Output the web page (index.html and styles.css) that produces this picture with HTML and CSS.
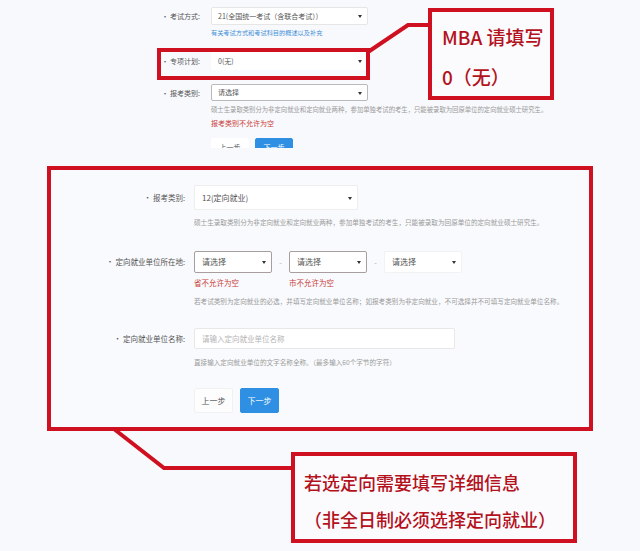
FILE: index.html
```html
<!DOCTYPE html>
<html lang="zh-CN">
<head>
    <meta charset="UTF-8">
    <meta name="viewport" content="width=device-width, initial-scale=1.0">
    <title>报考信息 - 定向就业说明</title>
    <link rel="stylesheet" href="styles.css">
</head>
<body>

    <div class="page">
        <!-- Original form snippet (top) -->
        <section class="snippet">
            <div class="s-row">
                <label class="lbl">• 考试方式:</label>
                <div class="ctl">
                    <div class="sel">21(全国统一考试（含联合考试）)<i class="caret"></i></div>
                    <a class="link" href="#">有关考试方式和考试科目的概述以及补充</a>
                </div>
            </div>

            <div class="s-row row-plan">
                <label class="lbl">• 专项计划:</label>
                <div class="ctl">
                    <div class="sel sel-plain">0(无)<i class="caret"></i></div>
                </div>
            </div>

            <div class="s-row row-type">
                <label class="lbl">• 报考类别:</label>
                <div class="ctl">
                    <div class="sel sel-dark">请选择<i class="caret"></i></div>
                    <p class="help">硕士生录取类别分为非定向就业和定向就业两种，参加单独考试的考生，只能被录取为回原单位的定向就业硕士研究生。</p>
                    <p class="error">报考类别不允许为空</p>
                    <div class="btns">
                        <button class="btn btn-prev">上一步</button>
                        <button class="btn btn-next">下一步</button>
                    </div>
                </div>
            </div>
        </section>

        <!-- Enlarged part, framed in red -->
        <section class="zoom-box">
            <div class="z-row">
                <label class="lbl">• 报考类别:</label>
                <div class="ctl">
                    <div class="sel sel-wide">12(定向就业)<i class="caret"></i></div>
                    <p class="help">硕士生录取类别分为非定向就业和定向就业两种，参加单独考试的考生，只能被录取为回原单位的定向就业硕士研究生。</p>
                </div>
            </div>

            <div class="z-row row-place">
                <label class="lbl">• 定向就业单位所在地:</label>
                <div class="ctl">
                    <div class="place">
                        <div class="sel sel-err">请选择<i class="caret"></i></div>
                        <span class="sep">-</span>
                        <div class="sel sel-err">请选择<i class="caret"></i></div>
                        <span class="sep">-</span>
                        <div class="sel sel-faint">请选择<i class="caret"></i></div>
                    </div>
                    <div class="errors">
                        <p class="error">省不允许为空</p>
                        <p class="error">市不允许为空</p>
                    </div>
                    <p class="help help-gap">若考试类别为定向就业的必选，并填写定向就业单位名称；如报考类别为非定向就业，不可选择并不可填写定向就业单位名称。</p>
                </div>
            </div>

            <div class="z-row row-name">
                <label class="lbl">• 定向就业单位名称:</label>
                <div class="ctl">
                    <input class="text-input" type="text" placeholder="请输入定向就业单位名称">
                    <p class="help help-gap">直接输入定向就业单位的文字名称全称。（最多输入60个字节的字符）</p>
                </div>
            </div>

            <div class="z-row row-btns">
                <span></span>
                <div class="btns">
                    <button class="btn btn-prev">上一步</button>
                    <button class="btn btn-next">下一步</button>
                </div>
            </div>
        </section>

        <!-- Callouts -->
        <div class="note note-top">MBA 请填写<br>0（无）</div>
        <div class="note note-bottom">若选定向需要填写详细信息<br>（非全日制必须选择定向就业）</div>

        <svg class="leaders" width="640" height="551" viewBox="0 0 640 551">
            <rect x="159" y="50" width="209" height="28" />
            <polyline points="368,52 408,25 430,25" />
            <polyline points="114,429 164,468 293,468" />
        </svg>
    </div>

</body>
</html>
```

FILE: styles.css
```css
/* Base */
body {
    margin: 0;
    background-color: #f8f9fc;
    font-family: "Noto Sans CJK SC", "Noto Sans", sans-serif;
    color: #555;
}

p {
    margin: 0;
}

.page {
    position: relative;
    width: 640px;
    height: 551px;
    overflow: hidden;
}

/* Shared controls */
.lbl {
    text-align: right;
    white-space: nowrap;
    color: #555;
}

.sel {
    position: relative;
    box-sizing: border-box;
    background-color: #fff;
    border: 1px solid #e6e6e6;
    border-radius: 2px;
    white-space: nowrap;
    color: #555;
}

.caret {
    position: absolute;
    top: 50%;
    right: 5px;
    width: 0;
    height: 0;
    margin-top: -1px;
    border-left: 2px solid transparent;
    border-right: 2px solid transparent;
    border-top: 3px solid #333;
}

.help {
    white-space: nowrap;
    color: #9a9a9a;
}

.error {
    white-space: nowrap;
    color: #c9403a;
}

.btns {
    display: flex;
}

.btn {
    box-sizing: border-box;
    padding: 0;
    border: 1px solid transparent;
    border-radius: 2px;
    font-family: inherit;
    cursor: pointer;
}

.btn-prev {
    background-color: #fdfdfd;
    border-color: #f1f1f1;
    color: #555;
}

.btn-next {
    background-color: #2f8fe3;
    border-color: #2f8fe3;
    color: #fff;
}

/* Top snippet */
.snippet {
    box-sizing: border-box;
    height: 148px;
    padding-top: 7px;
    overflow: hidden;
    font-size: 7px;
}

.s-row {
    display: grid;
    grid-template-columns: 200px 157px;
    column-gap: 11px;
    align-items: start;
}

.s-row .lbl {
    line-height: 18px;
}

.s-row .sel {
    height: 18px;
    padding: 0 6px;
    line-height: 16px;
}

.link {
    display: block;
    margin-top: 4px;
    line-height: 8px;
    font-size: 6.2px;
    color: #3d8fd9;
    text-decoration: none;
}

.row-plan {
    margin-top: 15px;
}

.s-row .sel-plain {
    border-color: #fff;
}

.row-type {
    margin-top: 14px;
}

.s-row .sel-dark {
    height: 17px;
    line-height: 15px;
    border-color: #b9b9b9;
}

.s-row .help {
    margin-top: 5px;
    line-height: 8px;
    font-size: 6.35px;
}

.s-row .error {
    margin-top: 5px;
    line-height: 8px;
}

.s-row .btns {
    margin-top: 11px;
    gap: 6px;
}

.s-row .btn {
    width: 38px;
    height: 18px;
    font-size: 7px;
}

.s-row .btn-prev {
    border-color: #fff;
    background-color: #fff;
}

/* Enlarged, red framed part */
.zoom-box {
    box-sizing: border-box;
    width: 546px;
    height: 265px;
    margin: 18px 0 0 47px;
    padding-top: 15px;
    border: 4px solid #cf1020;
    background-color: #f9fafd;
    font-size: 7.5px;
}

.z-row {
    display: grid;
    grid-template-columns: 134px auto;
    column-gap: 9px;
    align-items: start;
}

.z-row .lbl {
    line-height: 25px;
}

.z-row .sel {
    height: 22px;
    padding: 0 7px;
    line-height: 20px;
    font-size: 8px;
}

.z-row .sel-wide {
    width: 164px;
    height: 25px;
    line-height: 23px;
    border-color: #eeeeee;
}

.z-row .help {
    margin-top: 7px;
    line-height: 10px;
    font-size: 6.6px;
}

.z-row .help-gap {
    margin-top: 8px;
}

.row-place {
    margin-top: 24px;
}

.row-place .lbl {
    line-height: 22px;
}

.place {
    display: flex;
    align-items: center;
}

.place .sel {
    width: 78px;
}

.place .sel-err {
    border-color: #a89e9e;
}

.place .sel-faint {
    border-color: #f2f2f2;
}

.sep {
    width: 17px;
    text-align: center;
    color: #aaa;
}

.errors {
    display: flex;
    margin-top: 5px;
}

.errors .error {
    width: 95px;
    line-height: 10px;
}

.row-name {
    margin-top: 22px;
}

.row-name .lbl {
    line-height: 21px;
}

.text-input {
    display: block;
    box-sizing: border-box;
    width: 261px;
    height: 21px;
    margin: 0;
    padding: 0 7px;
    border: 1px solid #e8e8e8;
    border-radius: 2px;
    background-color: #fff;
    font-family: inherit;
    font-size: 7.5px;
    color: #555;
}

.text-input::placeholder {
    color: #b5b5b5;
}

.row-btns {
    margin-top: 21px;
}

.row-btns .btns {
    gap: 7px;
}

.row-btns .btn {
    width: 39px;
    height: 25px;
    font-size: 8px;
}

/* Callout notes */
.note {
    position: absolute;
    box-sizing: border-box;
    border: 4px solid #cf1020;
    background-color: #fbfbfd;
    color: #b3121d;
    font-weight: 500;
    white-space: nowrap;
}

.note-top {
    left: 428px;
    top: 8px;
    width: 126px;
    height: 92px;
    padding: 5px 0 0 10px;
    font-size: 19px;
    line-height: 40px;
}

.note-bottom {
    left: 291px;
    top: 452px;
    width: 286px;
    height: 91px;
    padding: 8px 0 0 9px;
    font-size: 18px;
    line-height: 37px;
}

/* Leader lines */
.leaders {
    position: absolute;
    left: 0;
    top: 0;
    pointer-events: none;
}

.leaders rect,
.leaders polyline {
    fill: none;
    stroke: #cf1020;
    stroke-width: 4;
    stroke-linejoin: miter;
}
```
